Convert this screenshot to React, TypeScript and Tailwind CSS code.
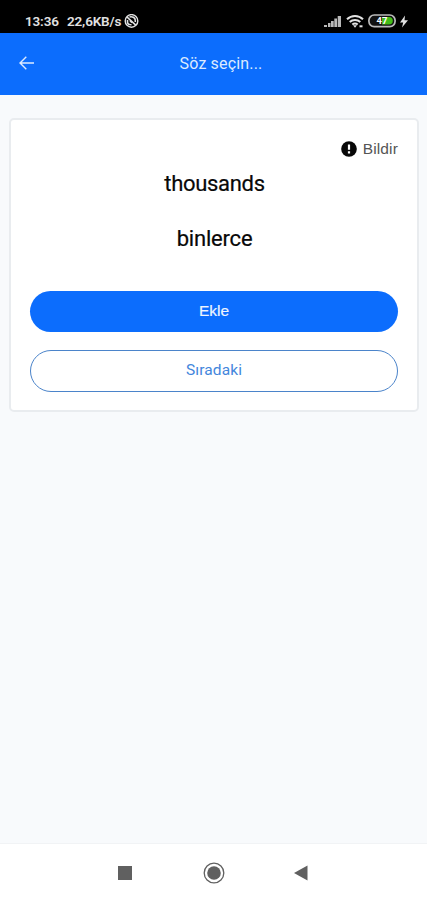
import React from "react";

function StatusBar() {
  return (
    <div className="flex h-[33px] shrink-0 items-start justify-between bg-black pr-[19px] pl-[25px] pt-[13px] text-[#e2e2e2]">
      <div className="flex h-4 items-center font-['Roboto',sans-serif] text-[13.5px] font-semibold leading-4 tracking-[-0.15px]">
        <span className="w-[42px]">13:36</span>
        <span className="w-[57px] whitespace-nowrap">22,6KB/s</span>
        <svg width="15" height="15" viewBox="0 0 15 15" fill="none" stroke="currentColor">
          <circle cx="7.5" cy="6.9" r="6.3" strokeWidth="1.4" />
          <path d="M3 3 12 11.3" strokeWidth="1.7" />
          <path d="M5.5 3C8 2.2 11.3 3.5 11.3 6.5v1.5M3.5 6v2c0 1.8 2 2.8 4 2.8M6 6.8l2 2" strokeWidth="1.6" />
        </svg>
      </div>
      <div className="flex h-4 items-center">
        <svg width="18" height="14" viewBox="0 0 18 14" fill="currentColor">
          <path d="M0 11h3v2H0zM4 9h2.5v4H4zM7 7h2.7v6H7zM10.3 4.5H13V13h-2.7zM13.7 2H17v11h-3.3z" opacity=".82" />
        </svg>
        <svg className="ml-[4px]" width="19" height="15" viewBox="0 0 19 15" fill="none" stroke="currentColor" strokeWidth="2">
          <path d="M1 5.2C5.5.8 12.5.8 17 5.2M3.7 8c3-2.8 7.6-2.8 10.6 0M6.3 10.5c1.5-1.2 3.9-1.2 5.4 0" />
          <path d="m7 11.2 2 2.5 2-2.5z" fill="currentColor" stroke="none" />
          <path d="M13.5 12.3h3" />
        </svg>
        <svg className="ml-[3px]" width="29" height="14" viewBox="0 0 29 14">
          <rect x=".9" y="1" width="26.2" height="11.6" rx="5.3" fill="#111" stroke="#bbb" strokeWidth="1.7" />
          <path d="M14 3h7a3.8 3.8 0 0 1 0 7.6h-7z" fill="#43bd18" />
          <text x="14" y="10.2" textAnchor="middle" fill="#fff" fontFamily="Roboto" fontSize="9.5" fontWeight="700">47</text>
        </svg>
        <svg className="ml-[3px]" width="8" height="13" viewBox="0 0 8 13" fill="currentColor">
          <path d="M5 .5 0 7.5h3.2L2 12.5 8 5.3H4.5z" />
        </svg>
      </div>
    </div>
  );
}

function Header() {
  return (
    <header className="grid h-[62px] shrink-0 grid-cols-[1fr_auto_1fr] items-center bg-[#0c6dfd] px-[19px] text-[#dceaff]">
      <button aria-label="Geri" className="justify-self-start">
        <svg className="mb-[2px]" width="16" height="14" viewBox="0 0 16 14" fill="none" stroke="currentColor" strokeWidth="1.4">
          <path d="M15 7H1M7.3.7 1 7l6.3 6.3" />
        </svg>
      </button>
      <h1 className="ml-[15px] font-['Roboto',sans-serif] text-[16px] leading-5 tracking-[0.16px]">Söz seçin...</h1>
    </header>
  );
}

function WordCard() {
  return (
    <main className="mr-2 ml-[9px] mt-[23px] flex h-[294px] shrink-0 flex-col rounded-[5px] border-2 border-[#e9ecef] bg-white px-[19px] font-['Liberation_Sans',sans-serif]">
      <button className="mt-[19px] flex h-5 items-center gap-[6px] self-end text-[15.5px] leading-5 tracking-[0.15px] text-[#555]">
        <svg width="16" height="16" viewBox="0 0 16 16">
          <circle cx="8" cy="8" r="7.8" fill="#080808" />
          <path d="M6.9 3.6h2.2v5.2H6.9zM6.9 10.2h2.2v2.2H6.9z" fill="white" />
        </svg>
        <span>Bildir</span>
      </button>
      <p className="mt-[9px] h-8 pl-px text-center font-['Roboto',sans-serif] text-[22px] leading-8 tracking-[-0.3px] text-[#080808] [-webkit-text-stroke:0.2px]">thousands</p>
      <p className="mt-[23px] h-8 pl-px text-center font-['Roboto',sans-serif] text-[22px] leading-8 tracking-[-0.2px] text-[#080808] [-webkit-text-stroke:0.2px]">binlerce</p>
      <button className="mt-[36px] h-[41px] shrink-0 rounded-full bg-[#0c6dfd] pb-[2px] text-[15.5px] text-[#eef5ff] [-webkit-text-stroke:0.2px]">Ekle</button>
      <button className="mt-[18px] h-[42px] shrink-0 rounded-full border border-[#4b84ca] font-['Roboto',sans-serif] text-[15.5px] tracking-[0.1px] text-[#4386dc]">Sıradaki</button>
    </main>
  );
}

function NavigationBar() {
  return (
    <nav className="mt-auto flex h-[57px] shrink-0 items-center justify-between border-t border-[#f1f3f5] bg-white pr-[119px] pl-[118px] pt-px text-[#606060]">
      <div className="size-[14px] bg-current" />
      <svg className="ml-px" width="22" height="22" viewBox="0 0 22 22">
        <circle cx="11" cy="11" r="9.8" fill="none" stroke="currentColor" strokeWidth="1.3" />
        <circle cx="11" cy="11" r="6.8" fill="currentColor" />
      </svg>
      <svg width="14" height="16" viewBox="0 0 14 16" fill="currentColor"><path d="M0 8 13.5.5v15z" /></svg>
    </nav>
  );
}

export default function App() {
  return (
    <div className="flex h-[900px] w-full flex-col overflow-hidden bg-[#f8fafc]">
      <StatusBar />
      <Header />
      <WordCard />
      <NavigationBar />
    </div>
  );
}
